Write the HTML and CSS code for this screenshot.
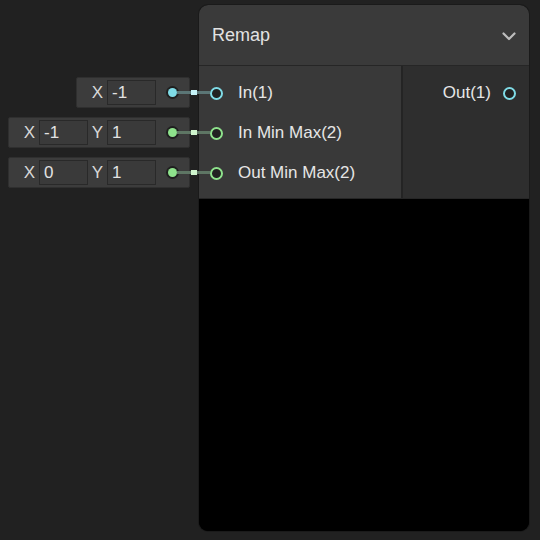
FILE: index.html
```html
<!DOCTYPE html>
<html>
<head>
<meta charset="utf-8">
<link rel="stylesheet" href="styles.css">
</head>
<body>
<div class="canvas">
  <div class="inputs">
    <div class="field cyan">
      <span class="lbl">X</span><span class="inp">-1</span>
      <span class="dot"></span><span class="wire"><i></i></span>
    </div>
    <div class="field green">
      <span class="lbl">X</span><span class="inp">-1</span>
      <span class="lbl">Y</span><span class="inp">1</span>
      <span class="dot"></span><span class="wire"><i></i></span>
    </div>
    <div class="field green">
      <span class="lbl">X</span><span class="inp">0</span>
      <span class="lbl">Y</span><span class="inp">1</span>
      <span class="dot"></span><span class="wire"><i></i></span>
    </div>
  </div>
  <div class="node">
    <div class="header">
      <span class="title">Remap</span>
      <svg class="chev" width="14" height="9" viewBox="0 0 14 9"><polyline points="1.5,1.5 7,7 12.5,1.5" fill="none" stroke="#bdbdbd" stroke-width="2.2" stroke-linecap="round" stroke-linejoin="round"/></svg>
    </div>
    <div class="body">
      <div class="col left">
        <div class="row"><span class="port cyan"></span><span class="name">In(1)</span></div>
        <div class="row"><span class="port green"></span><span class="name">In Min Max(2)</span></div>
        <div class="row"><span class="port green"></span><span class="name">Out Min Max(2)</span></div>
      </div>
      <div class="col right">
        <div class="row out"><span class="name">Out(1)</span><span class="port cyan"></span></div>
      </div>
    </div>
    <div class="preview"></div>
  </div>
</div>
</body>
</html>
```
FILE: styles.css
```css
html, body {
  margin: 0;
  padding: 0;
  background: #212121;
  width: 540px;
  height: 540px;
  overflow: hidden;
  font-family: "Liberation Sans", Arial, sans-serif;
}
.canvas {
  display: flex;
  padding-top: 5px;
}
.inputs {
  width: 190px;
  padding-right: 9px;
  padding-top: 72px;
  display: flex;
  flex-direction: column;
  align-items: flex-end;
  gap: 9px;
}
.field {
  position: relative;
  height: 31px;
  box-sizing: border-box;
  display: flex;
  align-items: center;
  padding-left: 11px;
  padding-right: 12px;
  background: #3c3c3c;
  border: 1px solid #2f2f2f;
  border-radius: 2px;
}
.lbl {
  width: 19px;
  text-align: center;
  color: #d8d8d8;
  font-size: 17px;
}
.inp {
  width: 49px;
  height: 25px;
  box-sizing: border-box;
  background: #3a3a3a;
  border: 1px solid #292929;
  color: #e2e2e2;
  font-size: 17px;
  line-height: 24px;
  padding-left: 4px;
}
.dot {
  width: 9px;
  height: 9px;
  margin-left: 12px;
  border-radius: 50%;
  box-sizing: border-box;
  box-shadow: 0 0 0 2px #1f1f1f;
}
.cyan .dot { background: #7fdbe6; }
.green .dot { background: #8ee28c; }
.wire {
  position: absolute;
  left: calc(100% - 12px);
  top: calc(50% - 1.5px);
  width: 33px;
  height: 3px;
  z-index: 2;
}
.cyan .wire { background: #5b7676; }
.green .wire { background: #5e7664; }
.wire i {
  position: absolute;
  left: 14px;
  top: -1px;
  width: 6px;
  height: 5px;
}
.cyan .wire i { background: #c6f3f8; }
.green .wire i { background: #cff5cd; }

.node {
  width: 330px;
  height: 526px;
  border-radius: 9px;
  overflow: hidden;
  background: #000;
  box-shadow: 0 0 0 1px #1a1a1a;
  display: flex;
  flex-direction: column;
}
.header {
  height: 61px;
  flex: none;
  box-sizing: border-box;
  border-bottom: 1px solid #262626;
  background: #3a3a3a;
  display: flex;
  align-items: center;
  justify-content: space-between;
  padding: 0 13px;
}
.title {
  color: #e2e2e2;
  font-size: 18px;
}
.chev { margin-top: 2px; }
.body {
  height: 132px;
  flex: none;
  display: grid;
  grid-template-columns: 202px 126px;
  column-gap: 2px;
  background: #242424;
  border-bottom: 1px solid #262626;
}
.col {
  padding-top: 7px;
}
.col.left { background: #393939; }
.col.right { background: #2e2e2e; }
.row {
  height: 40px;
  display: flex;
  align-items: center;
  padding-left: 11px;
  gap: 15px;
}
.row.out {
  justify-content: flex-end;
  padding-left: 0;
  padding-right: 13px;
  gap: 12px;
}
.port {
  width: 13px;
  height: 13px;
  box-sizing: border-box;
  border-radius: 50%;
  border: 2px solid;
  background: #222;
  position: relative;
  z-index: 3;
}
.port.cyan { border-color: #7fdbe6; }
.port.green { border-color: #8ee28c; }
.name {
  color: #e6e6e6;
  font-size: 17px;
}
.preview {
  flex: 1;
  background: #000;
}
```
